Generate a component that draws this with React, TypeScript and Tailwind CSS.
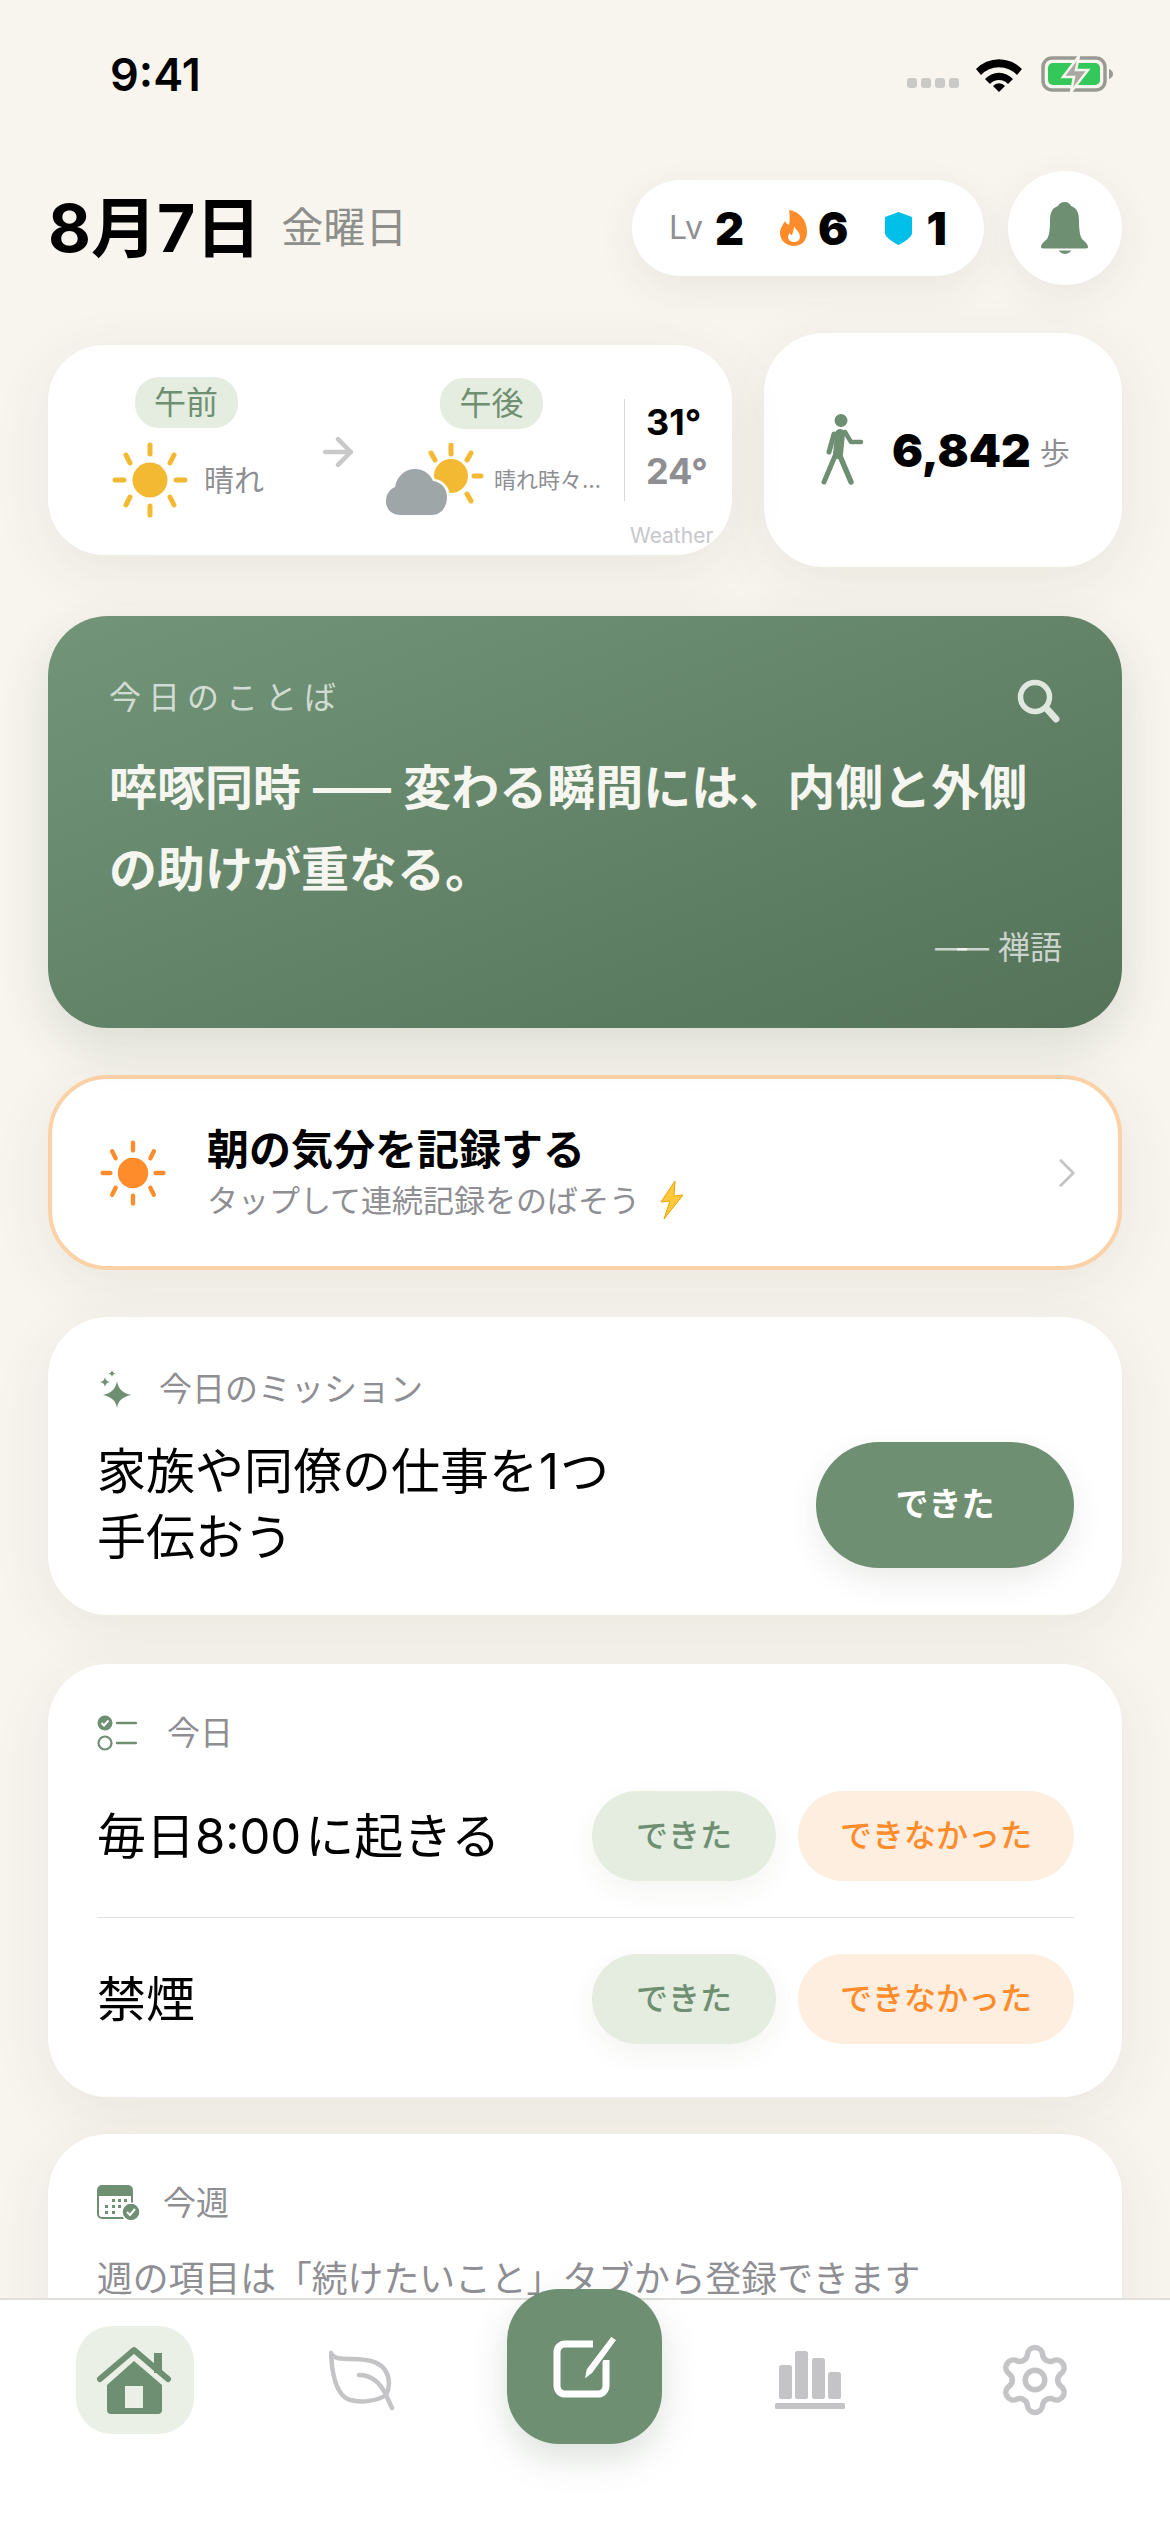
import React from 'react';
import { Settings, ChevronRight, ArrowRight } from 'lucide-react';

const Sun = ({ color = '#f3b932', className = '' }: { color?: string; className?: string }) => (
    <svg viewBox="0 0 76 76" className={className}>
        <circle cx="38" cy="38" r="17.5" fill={color} />
        <g stroke={color} strokeWidth="5" strokeLinecap="round">
            <path d="M38 3v9M38 64v9M3 38h9M64 38h9M14 13l4 8M62 13l-4 8M14 63l4-8M62 63l-4-8" />
        </g>
    </svg>
);

const CloudSun = ({ className = '' }: { className?: string }) => (
    <svg viewBox="0 0 104 74" className={className}>
        <circle cx="66" cy="33" r="17" fill="#f3b932" />
        <g stroke="#f3b932" strokeWidth="5" strokeLinecap="round">
            <path d="M66 2v9M86 10l-4 7M96 33h-7M46 10l4 7M86 58l-4-7" />
        </g>
        <path d="M16 72C6 72 0 66 0 57c0-7 4-12 10-14 1-12 10-19 21-19 9 0 16 5 19 12 8 1 15 8 15 18 0 10-7 18-17 18z" fill="#fff" />
        <path d="M16 72C6 72 1 66 1 58c0-7 4-12 9-14 2-11 10-18 20-18 9 0 15 5 18 12 8 1 14 7 14 16 0 10-6 18-15 18z" fill="#9ea6a7" />
    </svg>
);

const Walker = ({ className = '' }: { className?: string }) => (
    <svg viewBox="0 0 46 72" className={className} fill="none" stroke="#6f8f73" strokeLinecap="round" strokeLinejoin="round">
        <circle cx="21" cy="6.5" r="6.5" fill="#6f8f73" stroke="none" />
        <path d="M20 20l-2 20" strokeWidth="10" />
        <path d="M25 18l6 10h10" strokeWidth="4.500" />
        <path d="M14 20L9 38" strokeWidth="5" />
        <path d="M15 42L4 68" strokeWidth="5" />
        <path d="M20 42l11 26" strokeWidth="5.500" />
    </svg>
);

const Sparkles = ({ className = '' }: { className?: string }) => (
    <svg viewBox="0 0 36 38" className={className} fill="#6f8f73">
        <path d="M20 11c1 7 5 12 14 14-9 2-13 6-14 13-1-7-5-11-14-13 9-2 13-7 14-14z" />
        <path d="M8 7c.5 3 2 4.5 5 5-3 .5-4.500 2-5 5-.5-3-2-4.500-5-5 3-.5 4.500-2 5-5z" />
        <path d="M15 0c.3 2 1.300 3 3.500 3.500-2.200.5-3.200 1.500-3.500 3.500-.3-2-1.300-3-3.500-3.500 2.200-.5 3.200-1.500 3.500-3.500z" />
    </svg>
);

const TodoIcon = ({ className = '' }: { className?: string }) => (
    <svg viewBox="0 0 40 36" className={className}>
        <circle cx="8" cy="8" r="7.500" fill="#6f8f73" />
        <path d="M4.500 8l2.500 2.500 4.500-5" fill="none" stroke="#fff" strokeWidth="2" />
        <circle cx="8" cy="28" r="6.500" fill="none" stroke="#6f8f73" strokeWidth="2.200" />
        <path d="M20 8h19M20 28h19" stroke="#6f8f73" strokeWidth="2.400" strokeLinecap="round" />
    </svg>
);

const CalendarIcon = ({ className = '' }: { className?: string }) => (
    <svg viewBox="0 0 44 36" className={className}>
        <rect x="1" y="1" width="34" height="32" rx="4" fill="#fff" stroke="#6f8f73" strokeWidth="2" />
        <path d="M1 11V5a4 4 0 0 1 4-4h26a4 4 0 0 1 4 4v6z" fill="#6f8f73" />
        <g fill="#6f8f73">
            <rect x="15" y="14" width="3" height="3" />
            <rect x="21" y="14" width="3" height="3" />
            <rect x="27" y="14" width="3" height="3" />
            <rect x="8" y="20" width="3" height="3" />
            <rect x="15" y="20" width="3" height="3" />
            <rect x="21" y="20" width="3" height="3" />
            <rect x="8" y="26" width="3" height="3" />
            <rect x="15" y="26" width="3" height="3" />
        </g>
        <circle cx="34" cy="27" r="9" fill="#6f8f73" stroke="#fff" strokeWidth="1.500" />
        <path d="M30 27l3 3 5-6" fill="none" stroke="#fff" strokeWidth="2" />
    </svg>
);

const Card = ({ className = '', children }: { className?: string; children: React.ReactNode }) => (
    <div className={`bg-white shadow-[0_14px_60px_rgba(60,60,40,0.08)] ${className}`}>{children}</div>
);

const SectionLabel = ({ icon, gap, children }: { icon: React.ReactNode; gap: string; children: React.ReactNode }) => (
    <div className={`flex items-center ${gap} h-[40px]`}>
        {icon}
        <span className="text-[33px] text-[#8e8e93] leading-none">{children}</span>
    </div>
);

const HabitRow = ({ title }: { title: React.ReactNode }) => (
    <div className="flex items-center justify-between">
        <span className="text-[49px] text-black leading-none">{title}</span>
        <div className="flex gap-[22px]">
            <button className="w-[184px] h-[90px] rounded-[45px] bg-[#e5ede0] text-[#6f8f73] text-[32px] font-medium shadow-[0_10px_28px_rgba(60,60,40,0.06)]">
                できた
            </button>
            <button className="w-[276px] h-[90px] rounded-[45px] bg-[#fdeee0] text-[#ff8c2b] text-[32px] font-medium">
                できなかった
            </button>
        </div>
    </div>
);

const App = () => {
    return (
        <div className="relative w-[1170px] h-[2532px] overflow-hidden bg-[#f7f5ee] font-[Inter,'Noto_Sans_CJK_JP',sans-serif]">
            {/* Status bar */}
            <div className="flex items-center justify-between h-[120px] pl-[110px] pr-[55px] pt-[28px] pb-[0px]">
                <span className="text-[45px] font-semibold text-black leading-none">9:41</span>
                <div className="flex items-center">
                    <div className="flex gap-[4px] mt-[18px]">
                        <span className="w-[10px] h-[10px] rounded-[3px] bg-[#c9c9c5]" />
                        <span className="w-[10px] h-[10px] rounded-[3px] bg-[#c9c9c5]" />
                        <span className="w-[10px] h-[10px] rounded-[3px] bg-[#c9c9c5]" />
                        <span className="w-[10px] h-[10px] rounded-[3px] bg-[#c9c9c5]" />
                    </div>
                    <svg viewBox="0 0 50 36" className="w-[50px] h-[36px] ml-[15px]">
                        <path d="M2 13a32 32 0 0 1 46 0l-5 6a25 25 0 0 0-36 0z" />
                        <path d="M11 23a19 19 0 0 1 28 0l-5 5a12 12 0 0 0-18 0z" />
                        <path d="M19 30a8 8 0 0 1 12 0l-6 6z" />
                    </svg>
                    <svg viewBox="0 0 74 38" className="w-[74px] h-[38px] ml-[17px]">
                        <rect x="2" y="3" width="62" height="32" rx="9" fill="none" stroke="#9a9a94" strokeWidth="3.500" />
                        <rect x="7" y="8" width="52" height="22" rx="5" fill="#34c759" />
                        <path d="M68 14c3 1 4 3 4 5s-1 4-4 5z" fill="#9a9a94" />
                        <path d="M38 1L22 22h11l-3 15 17-22H35z" fill="#a9a9a2" stroke="#f7f5ee" strokeWidth="2.500" />
                    </svg>
                </div>
            </div>

            <div className="px-[48px]">
                {/* Header */}
                <div className="flex items-center justify-between mt-[51px] h-[114px]">
                    <div className="flex items-center gap-[20px]">
                        <span className="text-[66px] font-bold text-black leading-none">8月7日</span>
                        <span className="text-[42px] text-[#8e8e8a] leading-none">金曜日</span>
                    </div>
                    <div className="flex items-center gap-[24px]">
                        <div className="flex items-center w-[352px] h-[96px] rounded-[48px] bg-white pl-[37px] shadow-[0_12px_40px_rgba(60,60,40,0.07)]">
                            <span className="text-[32px] text-[#8e8e93] leading-none">Lv</span>
                            <span className="text-[45px] font-black text-black leading-none ml-[12px]">2</span>
                            <svg viewBox="0 0 28 36" className="w-[28px] h-[36px] ml-[36px]">
                                <path d="M9 0c9 1 18 9 18 22 0 9-6 14-13 14S0 31 0 23c0-5 3-8 5-12 1 2 2 3 4 4 1-5 1-10 0-15z" fill="#ff8c2b" />
                                <path d="M14 16c1 3 6 6 6 11 0 3-3 5-6 5s-6-2-6-5c0-2 1-3 2-4 0 1 1 2 2 2 1-3 2-6 2-9z" fill="#fff" />
                            </svg>
                            <span className="text-[45px] font-black text-black leading-none ml-[10px]">6</span>
                            <svg viewBox="0 0 28 34" className="w-[27px] h-[33px] ml-[37px]">
                                <path d="M14 0l14 5v17c0 4-9 10-14 12C9 32 0 26 0 22V5z" fill="#00c0ea" />
                            </svg>
                            <span className="text-[45px] font-black text-black leading-none ml-[14px]">1</span>
                        </div>
                        <div className="flex items-center justify-center w-[114px] h-[114px] rounded-full bg-white shadow-[0_12px_40px_rgba(60,60,40,0.07)]">
                            <svg viewBox="0 0 48 52" className="w-[48px] h-[52px]">
                                <path d="M24 0c3 0 5 2 6 4 6 2 8 7 8 15 0 9 1 15 3 18 3 3 6 5 6 8 0 1-1 2-3 2H3c-2 0-3-1-3-2 0-3 3-5 6-8 2-3 3-9 3-18 0-8 2-13 8-15 1-2 3-4 7-4z" fill="#6f8f73" />
                                <path d="M16 42h16c0 5-4 9-8 9s-8-4-8-9z" transform="translate(0 1)" fill="#6f8f73" />
                                <path d="M0 47.500h48" stroke="#fff" strokeWidth="2" />
                            </svg>
                        </div>
                    </div>
                </div>

                {/* Weather + steps */}
                <div className="flex items-center justify-between mt-[48px]">
                    <Card className="relative w-[684px] h-[210px] rounded-[56px] overflow-hidden flex">
                        <div className="flex flex-col items-center w-[230px] pt-[32px] pl-[46px] shrink-0">
                            <span className="flex items-center justify-center w-[103px] h-[51px] rounded-[24px] bg-[#e5ede0] text-[#6f8f73] text-[32px] leading-none">午前</span>
                            <div className="flex items-center gap-[16px] mt-[14px] self-start pl-[18px]">
                                <Sun className="w-[76px] h-[76px] shrink-0" />
                                <span className="text-[30px] text-[#8e8e93] leading-none whitespace-nowrap">晴れ</span>
                            </div>
                        </div>
                        <div className="pt-[85px] pl-[38px] w-[107px] shrink-0">
                            <ArrowRight className="w-[44px] h-[44px] text-[#c9c9c9]" strokeWidth={2.500} />
                        </div>
                        <div className="flex flex-col w-[239px] shrink-0 pt-[33px]">
                            <span className="flex items-center justify-center self-start ml-[55px] w-[103px] h-[51px] rounded-[24px] bg-[#e5ede0] text-[#6f8f73] text-[32px] leading-none">午後</span>
                            <div className="flex items-center gap-[5px] mt-[14px]">
                                <CloudSun className="w-[104px] h-[74px] shrink-0" />
                                <span className="text-[22px] text-[#8e8e93] leading-none whitespace-nowrap">晴れ時々…</span>
                            </div>
                        </div>
                        <div className="w-px h-[102px] bg-[#d9d9d9] mt-[54px] shrink-0" />
                        <div className="flex flex-col pl-[21px] pt-[59px] gap-[13px]">
                            <span className="text-[36px] font-bold text-black leading-none">31°</span>
                            <span className="text-[36px] font-bold text-[#8e8e93] leading-none">24°</span>
                        </div>
                        <span className="absolute left-[582px] bottom-[9px] text-[21px] text-[#c7c7cc] leading-none">Weather</span>
                    </Card>
                    <Card className="flex items-center w-[358px] h-[234px] rounded-[60px] pl-[56px]">
                        <Walker className="w-[46px] h-[72px] shrink-0" />
                        <span className="text-[46px] font-black text-black leading-none ml-[26px]">6,842</span>
                        <span className="text-[30px] text-[#8e8e93] leading-none ml-[9px] mt-[6px]">歩</span>
                    </Card>
                </div>

                {/* Quote */}
                <div className="relative mt-[49px] h-[412px] rounded-[60px] bg-gradient-to-br from-[#729579] to-[#547358] pt-[66px] pl-[61px] pr-[60px] shadow-[0_18px_50px_rgba(60,70,50,0.14)]">
                    <p className="text-[32px] tracking-[7px] text-white/70 leading-none">今日のことば</p>
                    <svg viewBox="0 0 44 44" className="absolute top-[63px] right-[62px] w-[44px] h-[44px]" fill="none" stroke="#dfe7df" strokeLinecap="round">
                        <circle cx="19" cy="18" r="14.500" strokeWidth="5.500" />
                        <path d="M31 30l9 10" strokeWidth="7" />
                    </svg>
                    <p className="text-[48px] font-semibold text-[#f6f6f1] leading-[82px] mt-[33px] whitespace-nowrap">
                        啐啄同時 <span className="inline-block tracking-[-18px] pr-[18px]">——</span> 変わる瞬間には、内側と外側
                        <br />
                        の助けが重なる。
                    </p>
                    <p className="text-[32px] text-white/70 text-right leading-none mt-[21px]">
                        <span className="inline-block tracking-[-10px] pr-[10px]">——</span> 禅語
                    </p>
                </div>

                {/* Morning mood */}
                <Card className="flex items-center mt-[47px] h-[195px] rounded-[60px] border-[4px] border-[#fbd2a8] pl-[48px] pr-[26px]">
                    <Sun color="#ff8c2b" className="w-[66px] h-[66px] shrink-0" />
                    <div className="ml-[41px] flex-1">
                        <p className="text-[42px] font-bold text-black leading-none mt-[4px]">朝の気分を記録する</p>
                        <div className="flex items-center mt-[9px]">
                            <span className="text-[31px] text-[#8e8e93] leading-none">タップして連続記録をのばそう</span>
                            <svg viewBox="0 0 30 40" className="w-[30px] h-[40px] ml-[16px]">
                                <path d="M19 1L5 22l9-1-6 18 19-24-9 1z" fill="#ffc93a" stroke="#f2a100" strokeWidth="1" />
                            </svg>
                        </div>
                    </div>
                    <ChevronRight className="w-[50px] h-[50px] text-[#c4c4c6]" strokeWidth={1.300} />
                </Card>

                {/* Mission */}
                <Card className="mt-[47px] h-[298px] rounded-[60px] pl-[49px] pr-[48px] pt-[52px]">
                    <SectionLabel gap="gap-[26px]" icon={<Sparkles className="w-[36px] h-[38px]" />}>今日のミッション</SectionLabel>
                    <div className="flex items-center justify-between mt-[30px]">
                        <p className="text-[49px] text-black leading-[66px]">
                            家族や同僚の仕事を<span className="mx-[1px]">1</span>つ
                            <br />
                            手伝おう
                        </p>
                        <button className="w-[258px] h-[126px] rounded-[63px] bg-[#6f8f73] text-white text-[33px] font-semibold shadow-[0_12px_30px_rgba(60,70,50,0.1)]">
                            できた
                        </button>
                    </div>
                </Card>

                {/* Today */}
                <Card className="mt-[49px] h-[433px] rounded-[60px] pl-[49px] pr-[48px] pt-[49px]">
                    <SectionLabel gap="gap-[30px]" icon={<TodoIcon className="w-[40px] h-[36px]" />}>今日</SectionLabel>
                    <div className="mt-[38px]">
                        <HabitRow title={<>毎日8:00<span className="ml-[4px]">に起きる</span></>} />
                    </div>
                    <div className="h-px bg-[#e3e3e0] mt-[36px] mb-[36px]" />
                    <HabitRow title="禁煙" />
                </Card>

                {/* This week */}
                <Card className="mt-[37px] h-[300px] rounded-[60px] pl-[49px] pr-[48px] pt-[49px]">
                    <SectionLabel gap="gap-[22px]" icon={<CalendarIcon className="w-[44px] h-[36px]" />}>今週</SectionLabel>
                    <p className="text-[35.800px] text-[#8e8e93] leading-none mt-[39px] whitespace-nowrap">
                        週の項目は「続けたいこと」タブから登録できます
                    </p>
                </Card>
            </div>

            {/* Tab bar */}
            <div className="absolute left-0 right-0 bottom-0 h-[234px] bg-white border-t-2 border-[#dfdfdb] grid grid-cols-5 px-[23px] items-start justify-items-center">
                <div className="flex items-center justify-center w-[118px] h-[108px] mt-[26px] rounded-[36px] bg-[#eaf0e6]">
                    <svg viewBox="0 0 78 68" className="w-[78px] h-[68px]">
                        <path d="M4 33L38 4l34 29" fill="none" stroke="#6f8f73" strokeWidth="6" strokeLinecap="round" strokeLinejoin="round" />
                        <rect x="58" y="7" width="8" height="20" fill="#6f8f73" />
                        <path d="M38 15L11 39v25a4 4 0 0 0 4 4h47a4 4 0 0 0 4-4V39z" fill="#6f8f73" />
                        <rect x="29" y="40" width="18" height="22" fill="#eaf0e6" />
                    </svg>
                </div>
                <div className="flex items-center justify-center h-[108px] mt-[26px] ml-[5px]">
                    <svg viewBox="0 0 68 60" className="w-[68px] h-[60px]" fill="none" stroke="#c4c4c6" strokeWidth="4.500" strokeLinecap="round" strokeLinejoin="round">
                        <path d="M2 3c3 6 10 6 20 6 15 0 37 1 38 24 0 4-1 8-3 12-9 6-24 8-36 5C8 46 3 25 2 3z" />
                        <path d="M30 25c11 0 20 5 27 20l6 13" />
                    </svg>
                </div>
                <div className="flex items-center justify-center w-[155px] h-[155px] -mt-[11px] rounded-[52px] bg-[#6f8f73] shadow-[0_14px_36px_rgba(60,90,60,0.18)]">
                    <svg viewBox="0 0 64 62" className="w-[64px] h-[62px]" fill="none">
                        <path d="M40 8H12a8 8 0 0 0-8 8v34a8 8 0 0 0 8 8h33a8 8 0 0 0 8-8V24" stroke="#fff" strokeWidth="7" />
                        <path d="M58 0l6 4-24 33-9 7 2-11z" fill="#fff" stroke="#6f8f73" strokeWidth="1.500" />
                    </svg>
                </div>
                <div className="flex items-center justify-center h-[108px] mt-[26px]">
                    <svg viewBox="0 0 70 58" className="w-[70px] h-[58px]" fill="#c4c4c6">
                        <rect x="4" y="14" width="13" height="34" rx="2.500" />
                        <rect x="20" y="0" width="13" height="48" rx="2.500" />
                        <rect x="37" y="7" width="13" height="41" rx="2.500" />
                        <rect x="53" y="21" width="13" height="27" rx="2.500" />
                        <rect x="0" y="52" width="70" height="6" rx="1.500" />
                    </svg>
                </div>
                <div className="flex items-center justify-center h-[108px] mt-[26px]">
                    <Settings className="w-[78px] h-[78px] text-[#c4c4c6]" strokeWidth={1.700} />
                </div>
            </div>
        </div>
    );
};

export default App;
